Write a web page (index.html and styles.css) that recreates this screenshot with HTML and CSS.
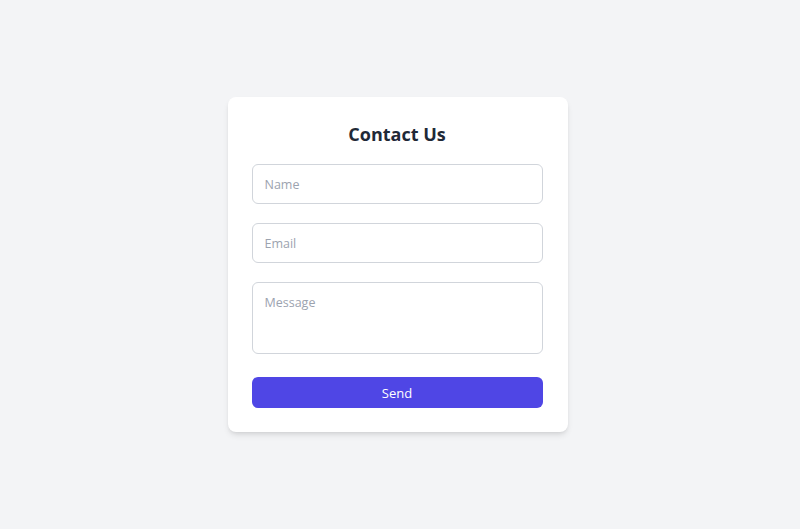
FILE: index.html
```html
<!DOCTYPE html>
<html lang="en">
<head>
<meta charset="utf-8">
<title>Contact Us</title>
<link rel="stylesheet" href="styles.css">
</head>
<body>
<form class="card">
  <h1 class="title">Contact Us</h1>
  <input class="field" type="text" placeholder="Name">
  <input class="field" type="email" placeholder="Email">
  <textarea class="field area" placeholder="Message"></textarea>
  <button class="send" type="button">Send</button>
</form>
</body>
</html>
```
FILE: styles.css
```css
* { box-sizing: border-box; }
html, body { height: 100%; }
body {
  margin: 0;
  background: #f3f4f6;
  font-family: "Open Sans", "Noto Sans", sans-serif;
  display: flex;
  align-items: center;
  justify-content: center;
  padding-right: 5px;
}
.card {
  width: 340px;
  background: #ffffff;
  border-radius: 8px;
  box-shadow: 0 4px 6px -1px rgba(0,0,0,0.1), 0 2px 4px -2px rgba(0,0,0,0.1);
  padding: 24px 25px 24px 24px;
  display: flex;
  flex-direction: column;
}
.title {
  margin: 0 0 16px;
  text-align: center;
  font-size: 18px;
  line-height: 27px;
  font-weight: 700;
  color: #1f2937;
}
.field {
  display: block;
  width: 100%;
  height: 40px;
  margin: 0 0 19px;
  padding: 0 12px;
  border: 1px solid #d1d5db;
  border-radius: 6px;
  font-family: inherit;
  font-size: 12.5px;
  color: #111827;
  background: #fff;
  outline: none;
}
.field::placeholder { color: #9ca3af; }
.area {
  height: 72px;
  padding: 11px 12px;
  resize: none;
  margin-bottom: 23px;
}
.send {
  height: 31px;
  border: none;
  border-radius: 6px;
  background: #4f46e5;
  color: #ffffff;
  font-family: inherit;
  font-size: 13px;
  cursor: pointer;
}
```
